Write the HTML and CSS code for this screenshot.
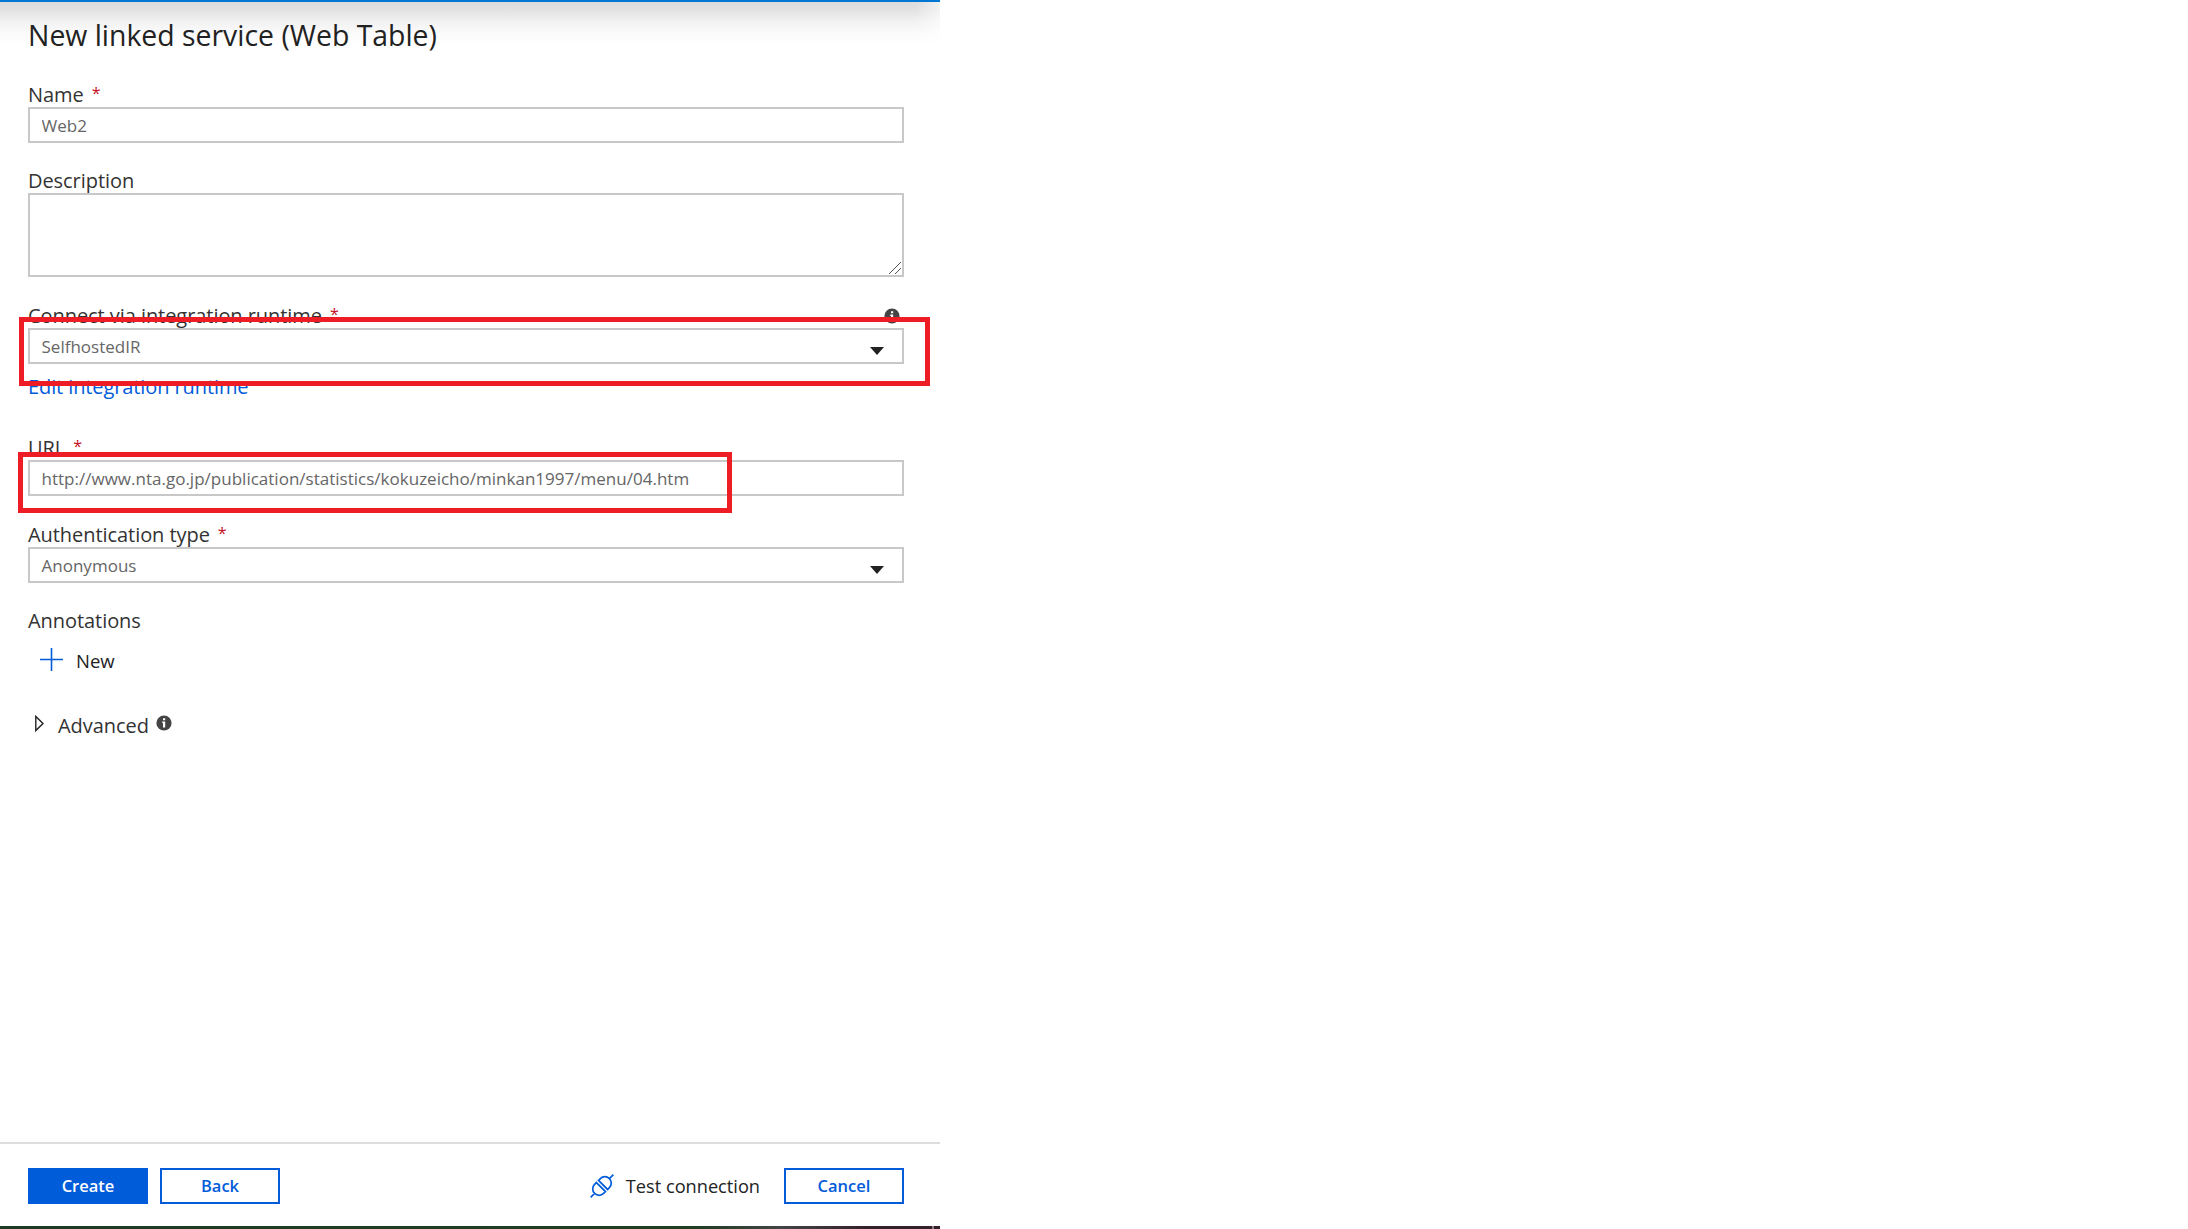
FILE: index.html
```
<!DOCTYPE html>
<html lang="en">
<head>
    <meta charset="UTF-8">
    <meta name="viewport" content="width=device-width, initial-scale=1.0">
    <title>New linked service (Web Table)</title>
    <link rel="stylesheet" href="styles.css">
</head>
<body>
    <div class="panel">
        <div class="content">
            <h1>New linked service (Web Table)</h1>

            <div class="field">
                <label for="name">Name <span class="required">*</span></label>
                <input type="text" id="name" value="Web2">
            </div>

            <div class="field">
                <label for="description">Description</label>
                <textarea id="description"></textarea>
                <svg class="resizer" viewBox="0 0 12 12"><path d="M0 12L12 0M6 12l6-6"/></svg>
            </div>

            <div class="field runtime">
                <label for="runtime">Connect via integration runtime <span class="required">*</span>
                    <svg class="info" viewBox="0 0 16 16"><circle cx="8" cy="8" r="7.6"/><path d="M7 3.3h2.2v2H7zM6.2 6.6h3v5.8H7V8h-.8z"/></svg>
                </label>
                <div class="select" id="runtime">
                    <span>SelfhostedIR</span>
                    <svg class="caret" viewBox="0 0 14 8"><path d="M0 0h14L7 8z"/></svg>
                </div>
                <a class="link">Edit integration runtime</a>
                <div class="highlight highlight-runtime"></div>
            </div>

            <div class="field url">
                <label for="url">URL <span class="required">*</span></label>
                <input type="text" id="url" value="http://www.nta.go.jp/publication/statistics/kokuzeicho/minkan1997/menu/04.htm">
                <div class="highlight highlight-url"></div>
            </div>

            <div class="field auth">
                <label for="auth">Authentication type <span class="required">*</span></label>
                <div class="select" id="auth">
                    <span>Anonymous</span>
                    <svg class="caret" viewBox="0 0 14 8"><path d="M0 0h14L7 8z"/></svg>
                </div>
            </div>

            <div class="annotations">
                <label>Annotations</label>
                <div class="new">
                    <svg class="plus" viewBox="0 0 23 23"><path d="M11.5 0v23M0 11.5h23"/></svg>
                    <span>New</span>
                </div>
            </div>

            <div class="advanced">
                <svg class="expand" viewBox="0 0 9 17"><path d="M.8 1.4v14.2L8 8.5z"/></svg>
                <span>Advanced</span>
                <svg class="info" viewBox="0 0 16 16"><circle cx="8" cy="8" r="7.6"/><path d="M7 3.3h2.2v2H7zM6.2 6.6h3v5.8H7V8h-.8z"/></svg>
            </div>
        </div>

        <div class="footer">
            <button class="primary">Create</button>
            <button>Back</button>
            <div class="test">
                <svg class="plug" viewBox="0 0 24 24">
                    <g transform="rotate(-45 12 12)">
                        <path d="M-4 12h5.5M22.5 12H28M10.5 5.600v12.800H7.900a6.400 6.400 0 0 1 0-12.800zM13.500 5.600v12.800h2.600a6.400 6.400 0 0 0 0-12.800z"/>
                    </g>
                </svg>
                <span>Test connection</span>
            </div>
            <button>Cancel</button>
        </div>
        <div class="taskbar"></div>
    </div>
</body>
</html>
```
FILE: styles.css
```
* {
    box-sizing: border-box;
}
body {
    margin: 0;
    background: #fff;
    font-family: "Open Sans", "Noto Sans", sans-serif;
    font-size: 20px;
    color: #333;
}
.panel {
    display: flex;
    flex-direction: column;
    width: 940px;
    height: 1229px;
    border-top: 2px solid #0078d4;
    overflow: hidden;
}
.content {
    flex: 1;
    padding: 13px 36px 0 28px;
    background:
        linear-gradient(90deg, rgba(255, 255, 255, 0) 915px, rgba(255, 255, 255, 0.6) 940px),
        linear-gradient(#dcdcdc 0, #e2e2e2 8px, #f2f2f2 20px, #fbfbfb 32px, #fff 42px);
}
h1 {
    margin: 0 0 25px;
    font-size: 28.4px;
    font-weight: normal;
    line-height: 40px;
    color: #222;
}
.field {
    position: relative;
    margin-bottom: 23px;
}
label {
    display: flex;
    align-items: center;
    height: 27px;
    padding-top: 2px;
    line-height: 25px;
    letter-spacing: -0.06px;
}
.required {
    margin: -3px 0 0 8px;
    font-size: 16px;
    color: #c50f1f;
}
input,
textarea,
.select {
    display: flex;
    align-items: center;
    width: 100%;
    height: 36px;
    margin: 0;
    padding: 0 12px 0 11.5px;
    border: 2px solid #c8c8c8;
    border-radius: 0;
    background: #fff;
    font-family: inherit;
    font-size: 17px;
    letter-spacing: 0.01px;
    color: #666;
}
textarea {
    display: block;
    height: 84px;
    resize: none;
}
.resizer {
    position: absolute;
    right: 3px;
    bottom: 3px;
    width: 12px;
    height: 12px;
    stroke: #555;
    stroke-width: 1;
}
.info {
    width: 16px;
    height: 16px;
    fill: #444;
}
.info path {
    fill: #fff;
}
.runtime {
    margin-top: 24px;
    margin-bottom: 32px;
}
.runtime .info {
    margin: 0 4px 0 auto;
}
.caret {
    width: 14px;
    height: 8px;
    margin: 10px 6px 0 auto;
    fill: #222;
}
.link {
    display: block;
    height: 37px;
    padding-top: 9px;
    line-height: 28px;
    letter-spacing: -0.1px;
    color: #015cda;
}
.highlight {
    position: absolute;
    border: 5px solid #ee1c25;
}
.highlight-runtime {
    top: 16px;
    left: -9px;
    width: 911px;
    height: 69px;
}
.highlight-url {
    top: 19px;
    left: -10px;
    width: 714px;
    height: 61px;
}
.url {
    margin-bottom: 24px;
}
.new {
    display: flex;
    align-items: center;
    margin: 13px 0 0 12px;
    height: 28px;
    font-size: 18.5px;
    color: #222;
}
.plus {
    width: 23px;
    height: 23px;
    margin: -2px 13px 0 0;
    fill: none;
    stroke: #015cda;
    stroke-width: 1.6;
}
.advanced {
    display: flex;
    align-items: center;
    margin: 37px 0 0 7px;
    height: 28px;
    letter-spacing: -0.05px;
}
.expand {
    width: 9px;
    height: 17px;
    margin: -3px 14px 0 0;
    fill: none;
    stroke: #222;
    stroke-width: 1.4;
}
.advanced .info {
    margin: -4px 0 0 7px;
}
.footer {
    display: flex;
    align-items: center;
    gap: 12px;
    height: 84px;
    padding: 2px 36px 0 28px;
    border-top: 2px solid #ddd;
}
button {
    width: 120px;
    height: 36px;
    padding: 0 0 2px;
    border: 2px solid #015cda;
    background: #fff;
    font-family: inherit;
    font-size: 16.5px;
    font-weight: 600;
    color: #015cda;
}
button.primary {
    background: #015cda;
    color: #fff;
}
.test {
    display: flex;
    align-items: center;
    margin: 0 12px 0 auto;
    font-size: 18.2px;
    color: #222;
}
.plug {
    width: 24px;
    height: 24px;
    margin-right: 12px;
    fill: none;
    stroke: #015cda;
    stroke-width: 1.7;
}
.taskbar {
    height: 3px;
    background: linear-gradient(90deg, #1f3a22 0, #213d24 700px, #444 780px, #33202a 870px, #33202a 932px, #8b7f86 932px, #8b7f86 934px, #33202a 934px);
}
```
